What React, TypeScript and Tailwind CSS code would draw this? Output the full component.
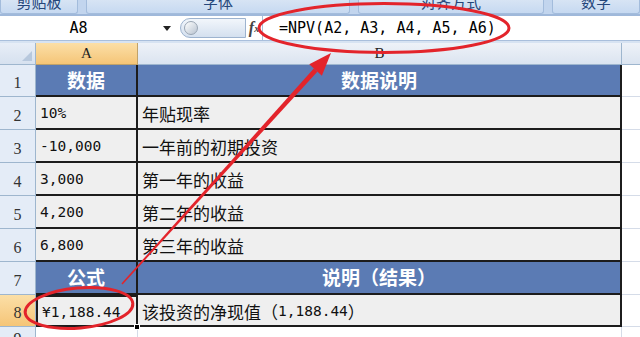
import React from "react";

const CJK = "font-['Noto_Sans_CJK_SC',sans-serif]";
const MONO = "font-['DejaVu_Sans_Mono','Noto_Sans_CJK_SC',monospace]";
const SERIF = "font-['Liberation_Serif',serif]";

type Row = {
  n: number;
  h: string;
  head?: boolean;
  a: React.ReactNode;
  b: React.ReactNode;
};

const ROWS: Row[] = [
  { n: 1, h: "h-[32px]", head: true, a: "数据", b: "数据说明" },
  { n: 2, h: "h-[33px]", a: "10%", b: "年贴现率" },
  { n: 3, h: "h-[33px]", a: "-10,000", b: "一年前的初期投资" },
  { n: 4, h: "h-[33px]", a: "3,000", b: "第一年的收益" },
  { n: 5, h: "h-[33px]", a: "4,200", b: "第二年的收益" },
  { n: 6, h: "h-[33px]", a: "6,800", b: "第三年的收益" },
  { n: 7, h: "h-[33px]", head: true, a: "公式", b: "说明（结果）" },
  {
    n: 8,
    h: "h-[32px]",
    a: "¥1,188.44",
    b: (
      <>
        该投资的净现值（<span className={`${MONO} text-[14.5px]`}>1,188.44</span>）
      </>
    ),
  },
];

const GROUPS = [
  { label: "剪贴板", w: "w-[78px]" },
  { label: "字体", w: "w-[264px]" },
  { label: "对齐方式", w: "w-[186px]" },
  { label: "数字", w: "flex-1" },
];

function Ribbon() {
  return (
    <div className="flex h-[14px] gap-[8px] bg-[#c2d5ee]">
      {GROUPS.map((g) => (
        <div
          key={g.label}
          className={`${g.w} relative overflow-hidden rounded-b-[3px] border-x border-b border-[#a3bcdc] bg-gradient-to-b from-[#d7e4f4] to-[#c6d9f1]`}
        >
          <div
            className={`${CJK} absolute inset-x-0 -top-[8px] text-center text-[15px] leading-[20px] text-[#25467a]`}
          >
            {g.label}
          </div>
        </div>
      ))}
    </div>
  );
}

function FormulaBar() {
  return (
    <div className="flex h-[24px] items-stretch bg-white">
      <div className={`${MONO} flex w-[157px] items-center justify-center text-[15px] text-black`}>A8</div>
      <div className="flex w-[20px] items-center justify-center">
        <div className="h-0 w-0 border-x-[4px] border-t-[5px] border-x-transparent border-t-[#222]" />
      </div>
      <div className="my-[2px] ml-[3px] flex w-[66px] items-center rounded-l-full border border-[#9db3cf] bg-gradient-to-b from-[#f2f6fb] to-[#d4e0ef] pl-[3px]">
        <div className="h-[14px] w-[14px] rounded-full border border-[#9aa6b4] bg-gradient-to-br from-white to-[#b9c4d1]" />
      </div>
      <div className={`${SERIF} flex w-[16px] items-center justify-center text-[16px] font-bold italic text-[#444]`}>
        f<span className="text-[10px]">x</span>
      </div>
      <div className={`${MONO} flex flex-1 items-center border-l border-[#a8bdd9] pl-[16px] text-[15px] text-black`}>
        =NPV(A2, A3, A4, A5, A6)
      </div>
    </div>
  );
}

function ColumnHeaders() {
  return (
    <div className={`${SERIF} flex h-[22px] text-[15px] text-[#222]`}>
      <div className="relative w-[36px] border-r border-b border-[#9eb6ce] bg-gradient-to-b from-[#e8eef7] to-[#d6e1ef]">
        <div className="absolute right-[3px] bottom-[3px] h-0 w-0 border-l-[10px] border-t-[10px] border-l-transparent border-t-transparent border-b-0 border-r-[10px] border-r-[#b7c8dd]" />
      </div>
      <div className="flex w-[102px] items-center justify-center border-r border-b border-[#c0a26a] bg-gradient-to-b from-[#fbdfa7] to-[#f5c577]">
        A
      </div>
      <div className="flex w-[484px] items-center justify-center border-r border-b border-[#9eb6ce] bg-gradient-to-b from-[#eef2f8] to-[#dbe4f0]">
        B
      </div>
      <div className="flex-1 border-b border-[#9eb6ce] bg-gradient-to-b from-[#eef2f8] to-[#dbe4f0]" />
    </div>
  );
}

function SheetRow({ row }: { row: Row }) {
  const selected = row.n === 8;
  const cell = row.head
    ? `bg-[#5b7bb4] text-white font-bold text-[19px] justify-center ${CJK}`
    : "bg-[#efefef] text-[#111] pl-[4px] pt-[3px]";
  return (
    <div className={`flex ${row.h}`}>
      <div
        className={`${SERIF} flex w-[36px] items-end justify-center border-r border-b border-[#9eb6ce] pb-[1px] text-[16px] text-[#333] ${
          selected ? "bg-gradient-to-b from-[#fbdfa7] to-[#f5c577]" : "bg-[#e4ecf7]"
        }`}
      >
        {row.n}
      </div>
      <div
        className={`flex w-[102px] items-center border-r-2 border-b-2 border-[#1c1c1c] ${cell} ${
          row.head ? "" : `${MONO} text-[14.5px]`
        } ${selected ? "border-l-2 border-t-2 pl-[2px] pt-[1px]" : ""}`}
      >
        {row.a}
      </div>
      <div
        className={`flex w-[484px] items-center border-r-2 border-b-2 border-[#1c1c1c] ${cell} ${
          row.head ? "" : `${CJK} text-[17px]`
        }`}
      >
        {row.b}
      </div>
      <div className="flex-1 border-b border-[#d5dce8] bg-white" />
    </div>
  );
}

function Annotations() {
  // arrow from the result cell up to the formula text
  const sx = 122, sy = 284, tx = 331, ty = 53;
  const dx = tx - sx, dy = ty - sy;
  const len = Math.hypot(dx, dy);
  const ux = dx / len, uy = dy / len;
  const nx = -uy, ny = ux;
  const headLen = 23, headW = 8.5;
  const bx = tx - ux * headLen, by = ty - uy * headLen;
  const shaft = [
    [sx + nx * 0.8, sy + ny * 0.8],
    [bx + nx * 2.4, by + ny * 2.4],
    [bx - nx * 2.4, by - ny * 2.4],
    [sx - nx * 0.8, sy - ny * 0.8],
  ];
  const head = [
    [tx, ty],
    [bx + nx * headW, by + ny * headW],
    [bx - nx * headW, by - ny * headW],
  ];
  const pts = (p: number[][]) => p.map((q) => q.join(",")).join(" ");
  return (
    <svg className="pointer-events-none absolute inset-0" width={640} height={337}>
      <ellipse cx={384} cy={28} rx={125} ry={24.5} fill="none" stroke="#e3242b" strokeWidth={3} />
      <ellipse
        cx={79}
        cy={308}
        rx={54}
        ry={20}
        fill="none"
        stroke="#e3242b"
        strokeWidth={3}
        transform="rotate(-5 79 308)"
      />
      <polygon points={pts(shaft)} fill="#e3242b" />
      <polygon points={pts(head)} fill="#e3242b" />
    </svg>
  );
}

export default function App() {
  return (
    <div className="relative h-[337px] w-[640px] overflow-hidden bg-white">
      <Ribbon />
      <div className="h-[2px] bg-[#9fb8da]" />
      <FormulaBar />
      <div className="h-[3px] border-t border-[#a9bfdc] bg-[#d7e3f2]" />
      <ColumnHeaders />
      {ROWS.map((r) => (
        <SheetRow key={r.n} row={r} />
      ))}
      <div className="flex h-[24px]">
        <div className={`${SERIF} flex w-[36px] items-start justify-center border-r border-[#9eb6ce] bg-[#e4ecf7] text-[16px] text-[#333]`}>
          9
        </div>
        <div className="w-[102px] border-r border-[#d5dce8]" />
        <div className="w-[484px] border-r border-[#d5dce8]" />
        <div className="flex-1" />
      </div>
      {/* fill handle on the active cell */}
      <div className="absolute left-[134px] top-[324px] h-[6px] w-[6px] border border-white bg-black" />
      <Annotations />
    </div>
  );
}
